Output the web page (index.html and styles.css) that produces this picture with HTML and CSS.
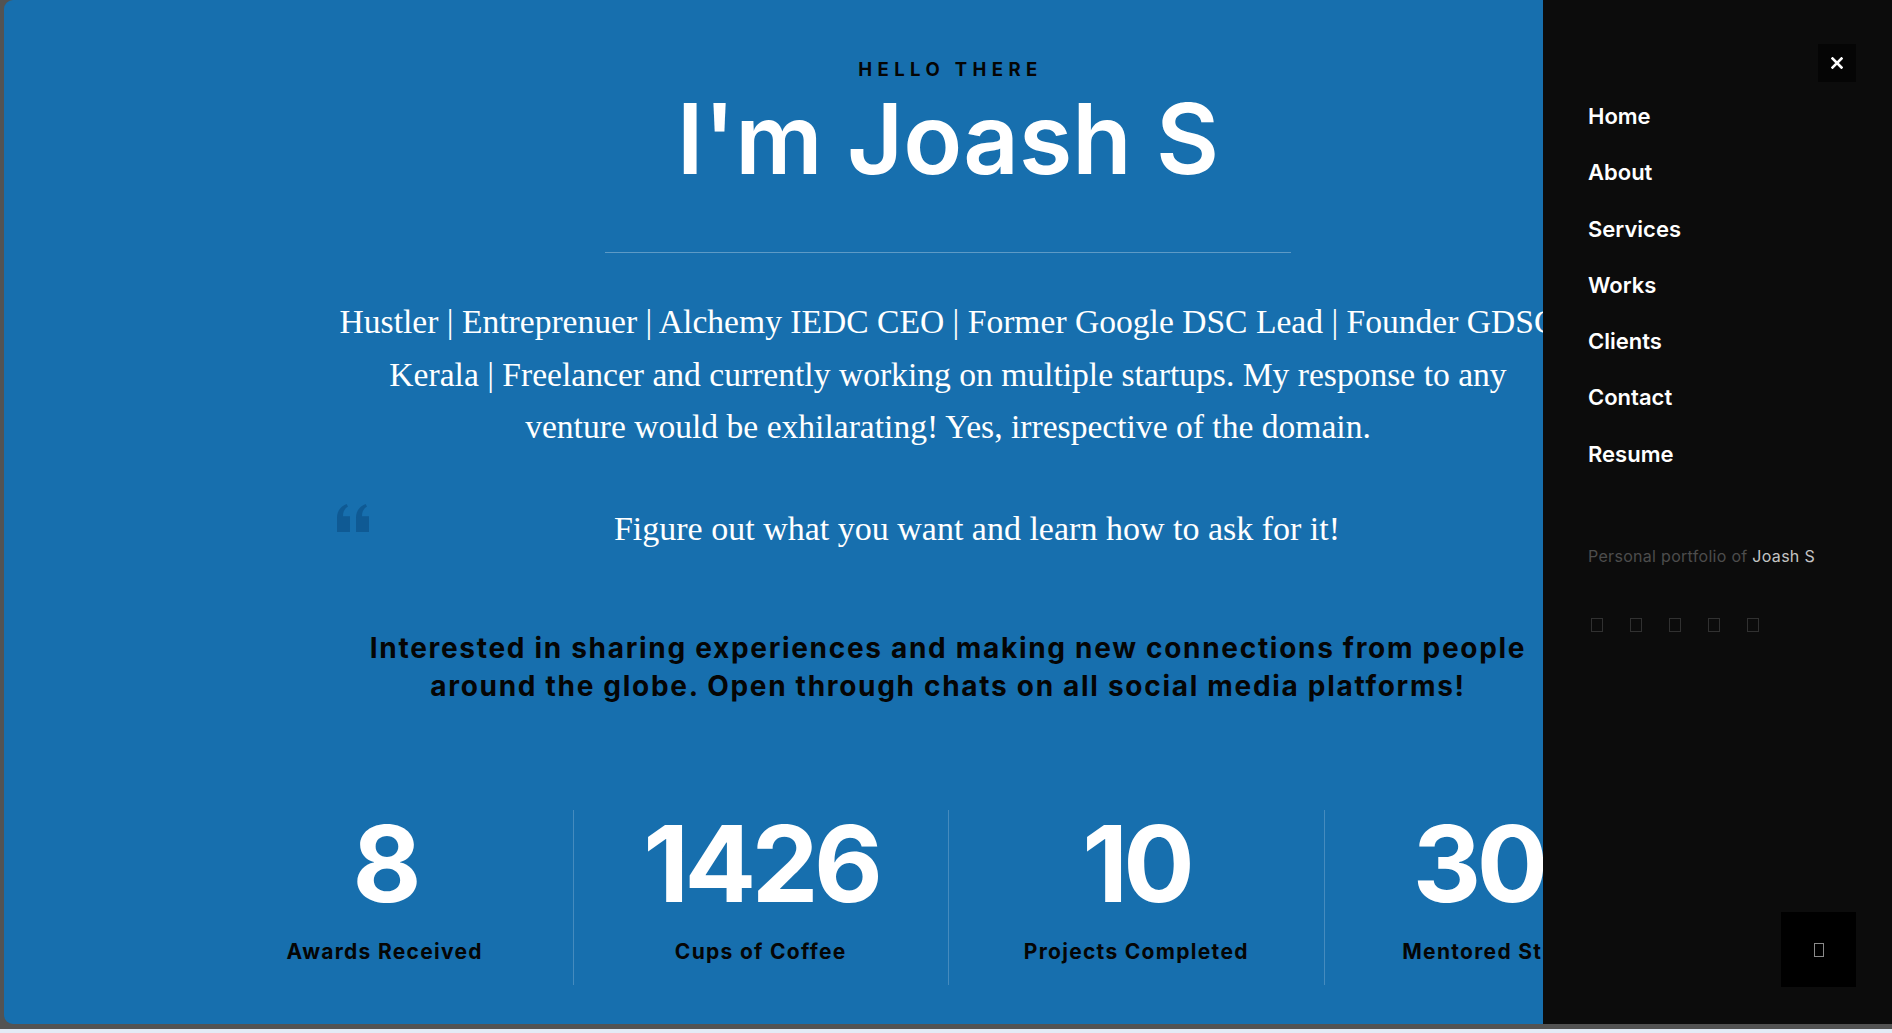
FILE: index.html
```html
<!DOCTYPE html>
<html lang="en">
<head>
<meta charset="utf-8">
<title>Joash S</title>
<link rel="stylesheet" href="styles.css">
</head>
<body>
<div class="window">
  <div class="screen">
    <main class="hero">
      <p class="eyebrow">HELLO THERE</p>
      <h1 class="title">I'm Joash S</h1>
      <hr class="rule">
      <p class="intro">Hustler | Entreprenuer | Alchemy IEDC CEO | Former Google DSC Lead | Founder GDSC Kerala | Freelancer and currently working on multiple startups. My response to any venture would be exhilarating! Yes, irrespective of the domain.</p>
      <blockquote class="quote">
        <svg class="quote-mark" width="32" height="28" viewBox="0 0 32 28" aria-hidden="true"><path d="M0 28V14C0 7.5 3 2.8 9.6 0L11 2.6C7.4 4.6 6 8 6 12.2H13V28Z M19 28V14C19 7.5 22 2.8 28.6 0L30 2.6C26.4 4.6 25 8 25 12.2H32V28Z" fill="#0f5a94"/></svg>
        <p class="quote-text">Figure out what you want and learn how to ask for it!</p>
      </blockquote>
      <p class="connect">Interested in sharing experiences and making new connections from people around the globe. Open through chats on all social media platforms!</p>
      <div class="stats">
        <div class="stat"><div class="stat-num">8</div><div class="stat-label">Awards Received</div></div>
        <div class="stat"><div class="stat-num">1426</div><div class="stat-label">Cups of Coffee</div></div>
        <div class="stat"><div class="stat-num">10</div><div class="stat-label">Projects Completed</div></div>
        <div class="stat"><div class="stat-num">300</div><div class="stat-label">Mentored Students</div></div>
      </div>
    </main>
    <aside class="sidebar">
      <div class="close-row">
        <button class="close" aria-label="Close">
          <svg width="12" height="12" viewBox="0 0 12 12"><path d="M1.5 1.5L10.5 10.5M10.5 1.5L1.5 10.5" stroke="#fff" stroke-width="2.6" stroke-linecap="square"/></svg>
        </button>
      </div>
      <nav class="menu">
        <a href="#">Home</a>
        <a href="#">About</a>
        <a href="#">Services</a>
        <a href="#">Works</a>
        <a href="#">Clients</a>
        <a href="#">Contact</a>
        <a href="#">Resume</a>
      </nav>
      <p class="credit">Personal portfolio of <span class="credit-name">Joash S</span></p>
      <div class="socials">
        <span class="tofu"></span><span class="tofu"></span><span class="tofu"></span><span class="tofu"></span><span class="tofu"></span>
      </div>
      <div class="bottom-row">
        <button class="top-btn" aria-label="Back to top"><span class="tofu tofu-light"></span></button>
      </div>
    </aside>
  </div>
</div>
</body>
</html>
```

FILE: styles.css
```css
html, body {
  margin: 0;
  padding: 0;
}
body {
  background: #e3ebf6;
  height: 1033px;
  overflow: hidden;
  font-family: Inter, "Liberation Sans", sans-serif;
}
.window {
  height: 1029px;
  background: #535353;
  padding-left: 4px;
  box-sizing: border-box;
}
.screen {
  height: 1024px;
  background: #176fae;
  border-radius: 9px 0 0 9px;
  position: relative;
  overflow: hidden;
}
.hero {
  text-align: center;
  padding-top: 58px;
  display: flex;
  flex-direction: column;
  align-items: center;
}
.eyebrow {
  margin: 0;
  font-size: 18.5px;
  line-height: 22px;
  font-weight: 700;
  letter-spacing: 5.4px;
  color: #050505;
  padding-left: 5px;
}
.title {
  margin: 6px 0 0;
  font-size: 97px;
  line-height: 106px;
  font-weight: 600;
  color: #fff;
  letter-spacing: 0;
}
.rule {
  width: 686px;
  margin: 60px 0 0;
  border: 0;
  border-top: 1px solid rgba(255, 255, 255, 0.3);
}
.intro {
  width: 1222px;
  margin: 43px 0 0;
  font-family: "Liberation Serif", serif;
  font-size: 33.6px;
  line-height: 52.5px;
  color: #fff;
}
.quote {
  width: 1222px;
  margin: 49px 0 0;
  display: flex;
  align-items: flex-start;
}
.quote-mark {
  flex: none;
  margin-top: 1px;
}
.quote-text {
  flex: 1;
  margin: 6px 0 0 26px;
  font-family: "Liberation Serif", serif;
  font-size: 34px;
  line-height: 40px;
  color: #fff;
}
.connect {
  width: 1170px;
  margin: 80px 0 0;
  font-size: 28px;
  line-height: 38.5px;
  font-weight: 700;
  letter-spacing: 1.7px;
  color: #050505;
}
.stats {
  width: 1502px;
  margin-top: 104px;
  display: grid;
  grid-template-columns: repeat(4, 1fr);
}
.stat {
  height: 175px;
  padding-top: 6.5px;
  box-sizing: border-box;
  border-left: 1px solid rgba(255, 255, 255, 0.2);
}
.stat:first-child {
  border-left: 0;
}
.stat-num {
  font-size: 106px;
  line-height: 96px;
  font-weight: 700;
  color: #fff;
  letter-spacing: -4.5px;
}
.stat-label {
  margin-top: 26.5px;
  font-size: 21px;
  line-height: 26px;
  font-weight: 700;
  letter-spacing: 1.3px;
  color: #050505;
}

.sidebar {
  position: absolute;
  top: 0;
  right: 0;
  width: 349px;
  height: 100%;
  background: #0c0c0c;
  padding: 44px 36px 0 45px;
  box-sizing: border-box;
  display: flex;
  flex-direction: column;
}
.close-row {
  display: flex;
  justify-content: flex-end;
}
.close {
  width: 38px;
  height: 38px;
  border: 0;
  padding: 0;
  background: #050505;
  display: flex;
  align-items: center;
  justify-content: center;
  cursor: pointer;
}
.menu {
  display: flex;
  flex-direction: column;
  margin-top: 6px;
}
.menu a {
  color: #fff;
  text-decoration: none;
  font-size: 22px;
  line-height: 56.3px;
  font-weight: 600;
}
.credit {
  margin: 64px 0 0;
  font-size: 16px;
  line-height: 20px;
  letter-spacing: 0.3px;
  color: #4d4d4d;
}
.credit-name {
  color: #c4c4c4;
}
.socials {
  display: flex;
  gap: 27px;
  margin-top: 52px;
  padding-left: 3px;
}
.tofu {
  display: block;
  width: 10px;
  height: 12px;
  border: 1px solid #313131;
}
.bottom-row {
  margin-top: auto;
  margin-bottom: 37px;
  display: flex;
  justify-content: flex-end;
}
.top-btn {
  width: 75px;
  height: 75px;
  border: 0;
  padding: 0;
  background: #000;
  display: flex;
  align-items: center;
  justify-content: center;
}
.tofu-light {
  width: 8px;
  height: 12px;
  border-color: #8a8a8a;
}
```
